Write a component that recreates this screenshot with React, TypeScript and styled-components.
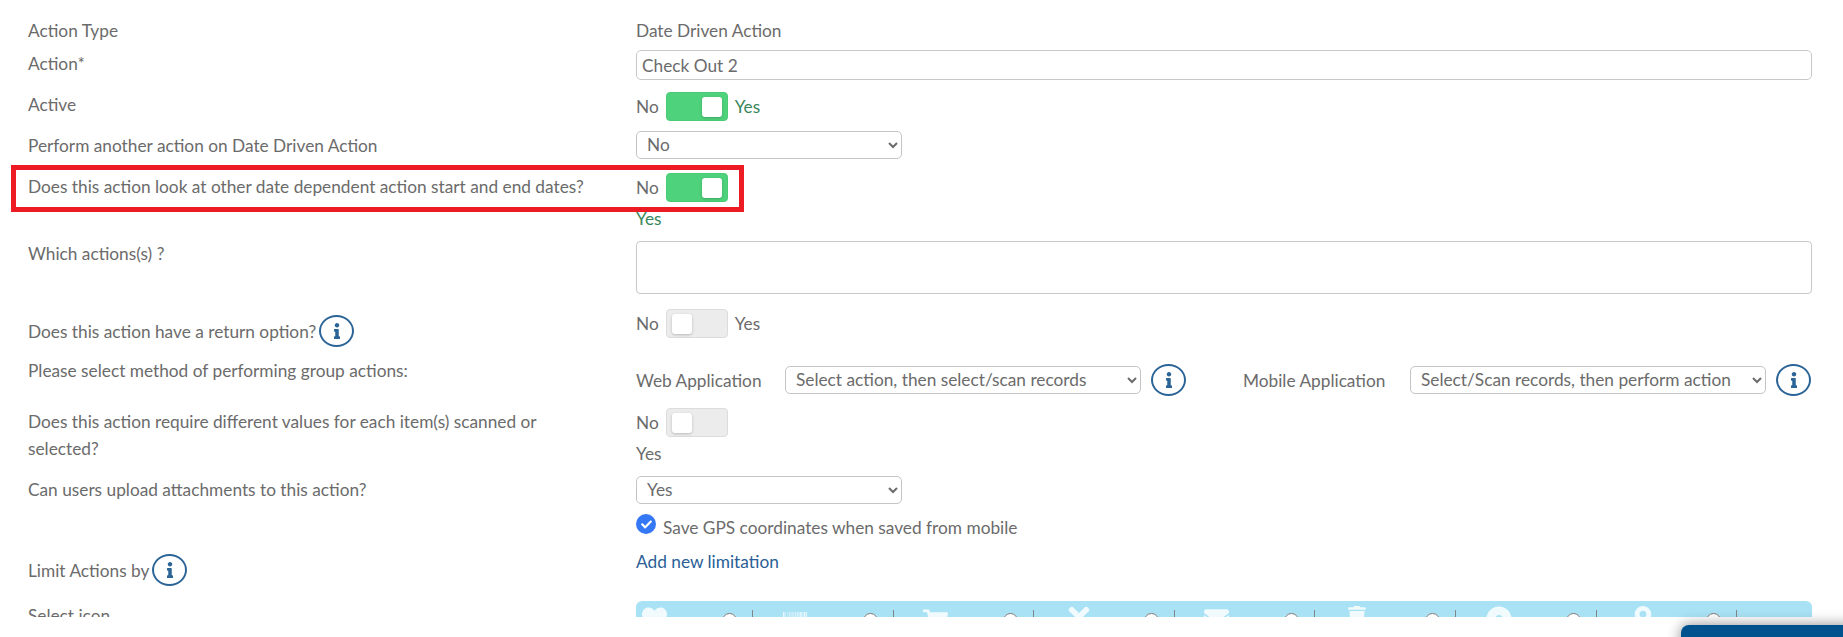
import React from 'react';
import styled, { createGlobalStyle } from 'styled-components';
import {
  FaHeart,
  FaBarcode,
  FaShoppingCart,
  FaTimes,
  FaEnvelope,
  FaTrash,
  FaDotCircle,
  FaMapMarkerAlt,
  FaInfo,
  FaCheck,
} from 'react-icons/fa';

const icons = [
  { Icon: FaHeart, size: 25, top: 0, left: 0 },
  { Icon: FaBarcode, size: 24, top: 3, left: 0 },
  { Icon: FaShoppingCart, size: 25, top: 2, left: 0 },
  { Icon: FaTimes, size: 30, top: -4, left: 0 },
  { Icon: FaEnvelope, size: 25, top: 0, left: 0 },
  { Icon: FaTrash, size: 20, top: 0, left: 2 },
  { Icon: FaDotCircle, size: 26, top: 0, left: 0 },
  { Icon: FaMapMarkerAlt, size: 22, top: 0, left: 6 },
];

function Toggle({ on, stacked }: { on?: boolean; stacked?: boolean }) {
  return (
    <ToggleField $stacked={stacked}>
      <span>No</span>
      <Track $on={on}>
        <Knob />
      </Track>
      <YesText $green={on} $stacked={stacked}>Yes</YesText>
    </ToggleField>
  );
}

function Info() {
  return (
    <InfoBadge>
      <FaInfo size={16} />
    </InfoBadge>
  );
}

export default function App() {
  return (
    <Page>
      <GlobalStyle />
      <Form>
        <Row $mb={6}>
          <Label>Action Type</Label>
          <Plain>Date Driven Action</Plain>
        </Row>
        <Row $mb={12}>
          <Label>Action*</Label>
          <TextInput defaultValue="Check Out 2" />
        </Row>
        <Row $mb={10}>
          <Label $nudge={-1}>Active</Label>
          <Toggle on />
        </Row>
        <Row $mb={14}>
          <Label $nudge={1}>Perform another action on Date Driven Action</Label>
          <Select $w={266} defaultValue="No">
            <option>No</option>
            <option>Yes</option>
          </Select>
        </Row>
        <Row $mb={9}>
          <Label>Does this action look at other date dependent action start and end dates?</Label>
          <Toggle on stacked />
        </Row>
        <Row $mb={15}>
          <Label $nudge={-1}>Which actions(s) ?</Label>
          <TextArea />
        </Row>
        <Row $mb={11}>
          <LabelWithInfo>
            Does this action have a return option?
            <Info />
          </LabelWithInfo>
          <Toggle />
        </Row>
        <Row $mb={12}>
          <Label $nudge={-1}>Please select method of performing group actions:</Label>
          <MethodGroup>
            <MethodLabel $w={149}>Web Application</MethodLabel>
            <Select $w={356} defaultValue="a">
              <option value="a">Select action, then select/scan records</option>
            </Select>
            <Info />
            <MethodLabel $w={167} $ml={47}>Mobile Application</MethodLabel>
            <Select $w={356} defaultValue="b">
              <option value="b">Select/Scan records, then perform action</option>
            </Select>
            <Info />
          </MethodGroup>
        </Row>
        <Row $mb={9}>
          <Label>Does this action require different values for each item(s) scanned or selected?</Label>
          <Toggle stacked />
        </Row>
        <Row $mb={10}>
          <Label>Can users upload attachments to this action?</Label>
          <Select $w={266} defaultValue="Yes">
            <option>Yes</option>
            <option>No</option>
          </Select>
        </Row>
        <Row $mb={7}>
          <Label />
          <CheckLine>
            <CheckDot>
              <FaCheck size={11} />
            </CheckDot>
            Save GPS coordinates when saved from mobile
          </CheckLine>
        </Row>
        <Row $mb={15}>
          <LabelWithInfo>
            Limit Actions by
            <Info />
          </LabelWithInfo>
          <AddLink href="#">Add new limitation</AddLink>
        </Row>
        <Row $mb={0}>
          <Label $nudge={1}>Select icon</Label>
          <IconStrip>
            {icons.map(({ Icon, size, top, left }, key) => (
              <IconCell key={key}>
                <IconSlot $top={top} $left={left}>
                  <Icon size={size} />
                </IconSlot>
                <Radio type="radio" name="icon" />
                <Divider />
              </IconCell>
            ))}
          </IconStrip>
        </Row>
      </Form>

      <Highlight />

      <BottomBar>
        <BottomButton />
      </BottomBar>
    </Page>
  );
}

const GlobalStyle = createGlobalStyle`
  html, body {
    margin: 0;
    padding: 0;
    background: #fff;
  }
  body {
    font-family: Lato, "Open Sans", sans-serif;
    font-size: 17.28px;
    line-height: 27px;
    color: #6b6b6b;
  }
`;

const Page = styled.div`
  position: relative;
  width: 1843px;
  height: 637px;
  overflow: hidden;
`;

const Form = styled.div`
  padding: 17px 0 0 28px;
`;

const Row = styled.div<{ $mb: number }>`
  display: grid;
  grid-template-columns: 608px 1176px;
  align-items: start;
  margin-bottom: ${(p) => p.$mb}px;
`;

const Label = styled.div<{ $nudge?: number }>`
  padding-right: 30px;
  min-height: 27px;
  margin-top: ${(p) => p.$nudge || 0}px;
`;

const LabelWithInfo = styled(Label)`
  display: flex;
  align-items: center;
  gap: 3px;
  padding-top: 6px;
`;

const Plain = styled.div`
  height: 27px;
`;

const TextInput = styled.input`
  box-sizing: border-box;
  width: 100%;
  height: 30px;
  padding: 0 5px;
  border: 1px solid #c9c9c9;
  border-radius: 5px;
  font: inherit;
  color: #6b6b6b;
  outline: none;
`;

const TextArea = styled.textarea`
  display: block;
  box-sizing: border-box;
  width: 100%;
  height: 53px;
  border: 1px solid #c9c9c9;
  border-radius: 4px;
  resize: none;
  outline: none;
`;

const Select = styled.select<{ $w: number }>`
  box-sizing: border-box;
  flex: none;
  width: ${(p) => p.$w}px;
  height: 28px;
  padding: 0 0 2px 6px;
  border: 1px solid #c4c4c4;
  border-radius: 5px;
  background: #fff;
  font: inherit;
  color: #6b6b6b;
  outline: none;
`;

const ToggleField = styled.div<{ $stacked?: boolean }>`
  display: flex;
  flex-wrap: ${(p) => (p.$stacked ? 'wrap' : 'nowrap')};
  align-items: center;
`;

const Track = styled.span<{ $on?: boolean }>`
  box-sizing: border-box;
  display: flex;
  justify-content: ${(p) => (p.$on ? 'flex-end' : 'flex-start')};
  align-items: center;
  width: 62px;
  height: 29px;
  margin-left: 7px;
  padding: 0 5px;
  border: 1px solid ${(p) => (p.$on ? '#4bcb76' : '#dcdcdc')};
  border-radius: 4px;
  background: ${(p) => (p.$on ? '#4fd27c' : '#ececec')};
`;

const Knob = styled.span`
  display: block;
  width: 20px;
  height: 20px;
  border-radius: 3px;
  background: #fff;
  box-shadow: 0 1px 3px rgba(0, 0, 0, 0.22);
`;

const YesText = styled.span<{ $green?: boolean; $stacked?: boolean }>`
  color: ${(p) => (p.$green ? '#38875a' : '#6b6b6b')};
  margin-left: ${(p) => (p.$stacked ? 0 : 7)}px;
  flex-basis: ${(p) => (p.$stacked ? '100%' : 'auto')};
  margin-top: ${(p) => (p.$stacked ? 3 : 0)}px;
`;

const InfoBadge = styled.span`
  box-sizing: border-box;
  flex: none;
  display: inline-flex;
  align-items: center;
  justify-content: center;
  width: 35px;
  height: 32px;
  border: 2px solid #2b6496;
  border-radius: 50%;
  background: #fff;
  color: #2b6496;
`;

const MethodGroup = styled.div`
  display: flex;
  align-items: center;
  gap: 10px;
  padding-top: 6px;
`;

const MethodLabel = styled.span<{ $w: number; $ml?: number }>`
  flex: none;
  width: ${(p) => p.$w - 10}px;
  margin-left: ${(p) => p.$ml || 0}px;
`;

const CheckLine = styled.div`
  display: flex;
  align-items: flex-start;
  gap: 7px;
  height: 27px;
`;

const CheckDot = styled.span`
  flex: none;
  display: inline-flex;
  align-items: center;
  justify-content: center;
  width: 20px;
  height: 20px;
  border-radius: 50%;
  background: #3578f6;
  color: #fff;
`;

const AddLink = styled.a`
  color: #2a6096;
  text-decoration: none;
  height: 27px;
`;

const IconStrip = styled.div`
  display: flex;
  gap: 30px;
  height: 60px;
  padding: 5px 0 0 6px;
  border-radius: 6px;
  background: #a9e2f5;
`;

const IconCell = styled.div`
  flex: none;
  display: flex;
  align-items: flex-start;
  width: 110.6px;
`;

const IconSlot = styled.span<{ $top: number; $left: number }>`
  box-sizing: border-box;
  flex: none;
  width: 80px;
  margin-top: ${(p) => p.$top}px;
  padding-left: ${(p) => p.$left}px;
  color: #f1fbfe;
  line-height: 0;
`;

const Radio = styled.input`
  flex: none;
  width: 15px;
  height: 15px;
  margin: 7px 0 0;
`;

const Divider = styled.span`
  flex: none;
  width: 1px;
  height: 40px;
  margin: 4px 0 0 15px;
  background: #80878b;
`;

/* annotation drawn over the screenshot */
const Highlight = styled.div`
  position: absolute;
  left: 11px;
  top: 165px;
  width: 723px;
  height: 37px;
  border: 5px solid #ed1c24;
  pointer-events: none;
`;

const BottomBar = styled.div`
  position: absolute;
  left: 0;
  right: 0;
  top: 617px;
  height: 20px;
  background: #fff;
`;

const BottomButton = styled.div`
  position: absolute;
  left: 1681px;
  top: 8px;
  width: 200px;
  height: 40px;
  border-radius: 8px;
  background: #00528f;
  box-shadow: 0 0 14px rgba(0, 0, 0, 0.45);
`;
